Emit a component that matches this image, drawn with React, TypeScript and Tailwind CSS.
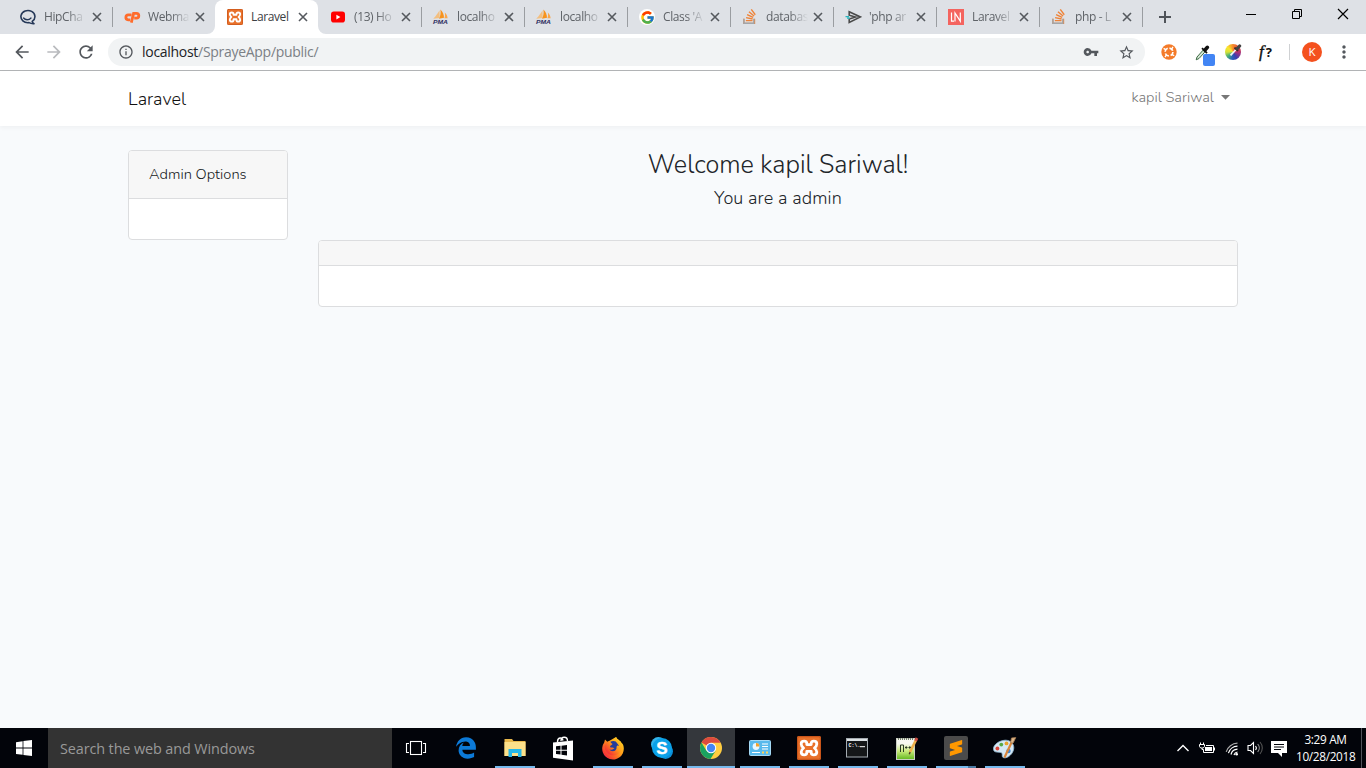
import React from "react";
import { SiStackoverflow, SiSublimetext } from "react-icons/si";
import { FcGoogle } from "react-icons/fc";
import { FaEdgeLegacy } from "react-icons/fa";
import { MdArrowBack, MdArrowForward, MdRefresh, MdVpnKey, MdStarBorder, MdInfoOutline, MdMoreVert } from "react-icons/md";

const HipChatIcon = () => (
  <svg className="-ml-[3px] shrink-0" width="17" height="16" viewBox="0 0 17 16" fill="none" stroke="#253858" strokeWidth="1.6">
    <path d="M13.2 12.4A7 6.1 0 1 0 10 13.6C11.4 14.3 13.2 14.8 15 14.6C14 14.1 13.4 13.4 13.2 12.4Z" strokeLinejoin="round" />
    <path d="M4.6 9C6.4 11.3 10 11.3 12 9" strokeLinecap="round" strokeWidth="1.3" />
  </svg>
);

const CpanelIcon = () => (
  <svg className="shrink-0" width="17" height="12" viewBox="0 0 17 12" fill="none" stroke="#ff6c2c" strokeWidth="2.8">
    <path d="M7.6 3.9H4.6A2.5 2.5 0 0 0 4.2 8.9H6.2" />
    <path d="M7.3 11.6L9.6 2.4H12.4A2.4 2.4 0 0 1 12.4 7.2H10.2" />
  </svg>
);

const XamppIcon = ({ size }: { size: number }) => (
  <span className="flex items-center justify-center rounded-[2px] bg-[#e9712a] text-white">
    <svg width={size} height={size} viewBox="0 0 24 24" fill="none" stroke="#fff" strokeWidth="2.8" strokeLinecap="round" strokeLinejoin="round">
      <rect x="0.6" y="0.6" width="22.8" height="22.8" rx="1.6" stroke="#c9551a" strokeWidth="1.2" />
      <path d="M9.8 8.6V7.6C9.8 5.9 8.8 5.2 7.2 5.2C5.2 5.2 4.2 6.2 4.2 8C4.2 9.8 5 10.8 6.6 12C5 13.2 4.2 14.2 4.2 16C4.2 17.8 5.2 18.8 7.2 18.8C8.8 18.8 9.8 18.1 9.8 16.4V15.4H14.2V16.4C14.2 18.1 15.2 18.8 16.8 18.8C18.8 18.8 19.8 17.8 19.8 16C19.8 14.2 19 13.2 17.4 12C19 10.8 19.8 9.8 19.8 8C19.8 6.2 18.8 5.2 16.8 5.2C15.2 5.2 14.2 5.9 14.2 7.6V8.6Z" />
    </svg>
  </span>
);

const YoutubeIcon = () => (
  <svg width="16" height="16" viewBox="0 0 16 16">
    <rect x="1" y="2.6" width="14" height="11" rx="2.8" fill="#f00" />
    <path d="M6.4 5.8V10.4L10.4 8.1Z" fill="#fff" />
  </svg>
);

const PmaIcon = () => (
  <svg className="shrink-0" width="18" height="16" viewBox="0 0 18 16">
    <path d="M7.5 1.2C5.8 4 4 7 1.2 9.8L7.7 9Z" fill="#f3bf80" />
    <path d="M8.4 0.4C10.8 2.5 12 5.5 12 8.8L7 9.7C8.6 7 8.9 3.5 8.4 0.4Z" fill="#f7931d" />
    <path d="M12.8 3.6C14.5 5.2 15.4 7 15.6 9.2L12.4 9.2C13.2 7.4 13.2 5.4 12.8 3.6Z" fill="#f9a64a" />
    <text x="1" y="15.2" fontFamily="Liberation Sans" fontSize="5.8" fontWeight="700" fontStyle="italic" fill="#2f2f5f" textLength="15" lengthAdjust="spacingAndGlyphs">PMA</text>
  </svg>
);

const ArtisanIcon = () => (
  <svg className="shrink-0" width="17" height="16" viewBox="0 0 17 16" fill="none">
    <path d="M4.2 2.8L15.4 8L4.2 13.4V10L10.4 8L4.2 6.2Z" stroke="#4a4a4a" strokeWidth="1.6" />
    <path d="M0.5 7.6H4M2 9.2H5" stroke="#27b5bd" strokeWidth="1.3" />
  </svg>
);

const LnIcon = () => (
  <svg width="16" height="16" viewBox="0 0 16 16" fill="none">
    <rect width="16" height="16" fill="#f4645f" />
    <path d="M3.5 3.5V12.2H6M7 12.5V4L12.3 12.2V3.5" stroke="#fff" strokeWidth="1.2" />
  </svg>
);

const StackIcon = () => (
  <span className="relative block size-4">
    <SiStackoverflow size={15} color="#ef8236" />
    <svg className="absolute left-0 top-0" width="16" height="16" viewBox="0 0 16 16" fill="none" stroke="#a2a6aa" strokeWidth="1.4">
      <path d="M1.9 9.8V14.3H11.8V9.8" />
    </svg>
  </span>
);

const GoogleIcon = () => (
  <span className="flex size-4 items-center justify-center rounded-full bg-white"><FcGoogle size={15} /></span>
);

const tabs = [
  { title: "HipCha", icon: <HipChatIcon /> },
  { title: "Webma", icon: <CpanelIcon /> },
  { title: "Laravel", icon: <XamppIcon size={16} />, active: true },
  { title: "(13) Ho", icon: <YoutubeIcon /> },
  { title: "localho", icon: <PmaIcon /> },
  { title: "localho", icon: <PmaIcon /> },
  { title: "Class 'A", icon: <GoogleIcon /> },
  { title: "databas", icon: <StackIcon /> },
  { title: "'php ar", icon: <ArtisanIcon /> },
  { title: "Laravel", icon: <LnIcon /> },
  { title: "php - L", icon: <StackIcon /> },
];

function TabStrip() {
  return (
    <div className="flex h-[34px] shrink-0 bg-[#dee1e6] pl-[9px]">
      {tabs.map((t, i) => (
        <div key={i} className={"relative flex h-[34px] w-[103px] shrink-0 items-center pl-3 " + (t.active ? "rounded-t-lg bg-white" : "")}>
          {t.active && (
            <>
              <svg className="absolute -left-2 bottom-0" width="8" height="8" viewBox="0 0 8 8"><path d="M8 0V8H0A8 8 0 0 0 8 0Z" fill="#fff" /></svg>
              <svg className="absolute -right-2 bottom-0" width="8" height="8" viewBox="0 0 8 8"><path d="M0 0V8H8A8 8 0 0 1 0 0Z" fill="#fff" /></svg>
            </>
          )}
          <div className="flex w-4 shrink-0 items-center justify-center">{t.icon}</div>
          <div
            className={
              "w-[42px] shrink-0 whitespace-nowrap text-[12px] leading-4 tracking-[-0.38px] " +
              (t.active ? "ml-2 text-[#3c4043]" : "text-[#5f6368] mask-r-from-55% mask-r-to-100% ") +
              (i === 0 ? "ml-[7px] mr-px" : t.active ? "" : "ml-2")
            }
          >
            {t.title}
          </div>
          <svg className="ml-[5px] shrink-0" width="10" height="10" viewBox="0 0 10 10" stroke="#55595e" strokeWidth="1.6"><path d="M1 1L9 9M9 1L1 9" /></svg>
          {i !== 1 && i !== 2 && <div className="absolute right-[-1px] top-[7px] h-5 w-px bg-[#9a9da1]" />}
        </div>
      ))}
      <svg className="ml-[17px] mt-[11px]" width="12" height="12" viewBox="0 0 12 12" stroke="#50545a" strokeWidth="2"><path d="M6 0V12M0 6H12" /></svg>
      <div className="ml-auto mt-2 flex gap-[34px] pr-[17px]">
        <svg width="12" height="12" viewBox="0 0 12 12" stroke="#000"><path d="M1 6.5H11" /></svg>
        <svg width="12" height="12" viewBox="0 0 12 12" stroke="#000" fill="none"><path d="M1.5 3.5H8.5V10.5H1.5ZM3.5 3.5V1.5H10.5V8.5H8.5" /></svg>
        <svg width="12" height="12" viewBox="0 0 12 12" stroke="#000" strokeWidth="1.2"><path d="M1 1L11 11M11 1L1 11" /></svg>
      </div>
    </div>
  );
}

const OrangeExt = () => (
  <svg width="16" height="16" viewBox="0 0 16 16" fill="none">
    <circle cx="8" cy="8" r="7.7" fill="#f47b2a" />
    <circle cx="8" cy="8" r="3.9" stroke="#fff" strokeWidth="1.7" strokeDasharray="4.3 1.83" />
    <path d="M2.6 4.4L4.6 5.6M12 2.8L10.8 4.8M4 13.2L5.2 11.2M13.2 11.8L11.2 10.6" stroke="#fff" strokeWidth="1.3" />
  </svg>
);

const DropperExt = () => (
  <svg width="20" height="22" viewBox="0 0 20 22" fill="none">
    <path d="M1.2 15.8L2 13L8.6 5.6L10.4 7.4L4 14.5Z" fill="#d5e6d5" stroke="#3d6b45" strokeWidth="1" />
    <path d="M7 4.2L12 9.2" stroke="#111" strokeWidth="1.8" />
    <path d="M10 6L12.4 3.3" stroke="#111" strokeWidth="3.6" strokeLinecap="round" />
    <rect x="8" y="10" width="12" height="12" rx="2" fill="#4285f4" />
  </svg>
);

const WheelExt = () => (
  <span className="relative block size-4 rounded-full bg-[conic-gradient(#f58a2c,#e8443a_50deg,#a0307e_100deg,#3a3fb0_150deg,#2a63b8_190deg,#45b07a_230deg,#d7e23a_270deg,#fbe62c_310deg,#f58a2c)]">
    <svg className="absolute left-0 top-0" width="17" height="16" viewBox="0 0 17 16" fill="none">
      <path d="M5.5 11.4L11.5 5" stroke="#f3f3f3" strokeWidth="1.8" />
      <path d="M9.5 3.6L13 7" stroke="#222" strokeWidth="1.6" /><path d="M12 4.8L14.6 2" stroke="#444" strokeWidth="3.2" strokeLinecap="round" />
    </svg>
  </span>
);

function Toolbar() {
  return (
    <div className="flex h-[37px] shrink-0 items-center border-b border-[#b2b4b6] bg-white pl-3 pr-3">
      <MdArrowBack size={20} color="#54585d" />
      <MdArrowForward size={20} color="#b9bbbe" className="ml-3" />
      <MdRefresh size={20} color="#54585d" className="ml-3" />
      <div className="ml-3 flex h-7 w-[1037px] items-center rounded-full bg-[#f1f3f4] pl-[10px] pr-[10px]">
        <MdInfoOutline size={16} color="#54585d" />
        <div className="ml-2 whitespace-nowrap pb-px text-[14px] tracking-[-0.29px] text-[#7b8085]">
          <span className="text-[#202124]">localhost</span>/SprayeApp/public/
        </div>
        <MdVpnKey size={16} color="#54585d" className="ml-auto" />
        <MdStarBorder size={17} color="#54585d" className="ml-[19px]" />
      </div>
      <div className="ml-4 flex items-center">
        <OrangeExt />
        <span className="ml-[18px] mt-[6px]"><DropperExt /></span>
        <span className="ml-[10px]"><WheelExt /></span>
        <span className="ml-[18px] flex w-4 text-[17px] leading-5 text-[#111]">
          <i className="font-['Liberation_Serif',serif] [-webkit-text-stroke:0.4px]">f</i>
          <span className="ml-[2px] font-['Open_Sans',sans-serif] text-[13px] font-bold">?</span>
        </span>
        <span className="ml-[14px] h-4 w-px bg-[#cfd1d3]" />
        <span className="ml-3 flex size-5 items-center justify-center rounded-full bg-[#f4511e] text-[11.5px] text-white">K</span>
        <MdMoreVert size={20} color="#54585d" className="ml-3" />
      </div>
    </div>
  );
}

function Page() {
  return (
    <div className="flex-1 bg-[#f8fafc] font-['Nunito','Open_Sans',sans-serif] text-[#212529]">
      <nav className="flex h-[55px] items-center justify-between bg-white pl-32 pr-[136px] shadow-[0_2px_4px_rgba(0,0,0,0.04)]">
        <span className="pt-px text-[18px] font-light text-[#111]">Laravel</span>
        <span className="flex items-center pb-px text-[14.6px] font-light text-[#777]">
          kapil Sariwal
          <svg className="ml-[7px]" width="9" height="5" viewBox="0 0 9 5" fill="#777"><path d="M0 0H9L4.5 4.8Z" /></svg>
        </span>
      </nav>
      <main className="flex items-start gap-[30px] px-32 pt-6">
        <section className="w-40 overflow-hidden rounded border border-[#dcdddf] bg-white">
          <div className="flex h-12 items-center border-b border-[#dcdddf] bg-[#f7f7f7] pb-px pl-5 text-[14.7px] font-light text-[#16191c]">Admin Options</div>
          <div className="h-10" />
        </section>
        <div className="w-[920px]">
          <h1 className="text-center text-[25.2px] font-light leading-[30px]">Welcome kapil Sariwal!</h1>
          <h2 className="mt-[7px] text-center text-[18px] font-light leading-[22px] tracking-[0.12px]">You are a admin</h2>
          <section className="mt-[31px] overflow-hidden rounded border border-[#dcdddf] bg-white">
            <div className="h-[25px] border-b border-[#dcdddf] bg-[#f7f7f7]" />
            <div className="h-10" />
          </section>
        </div>
      </main>
    </div>
  );
}

const TaskView = () => (
  <svg className="mr-[2px]" width="22" height="16" viewBox="0 0 22 16" fill="none" stroke="#fff" strokeWidth="1.1">
    <rect x="5.5" y="1.5" width="11" height="13" />
    <path d="M4 3.5H1.5V12.5H4M18 3.5H20.5V12.5H18" />
  </svg>
);

const Explorer = () => (
  <svg width="22" height="20" viewBox="0 0 22 20">
    <path d="M0.5 1H8L9.5 3H21.5V18H0.5Z" fill="#e9b84c" />
    <path d="M0.5 4H21.5V18H0.5Z" fill="#fce08a" />
    <path d="M4.5 19V11H17.5V19H14V15H8V19Z" fill="#26b7e8" />
  </svg>
);

const Store = () => (
  <svg className="mr-[2px]" width="22" height="25" viewBox="0 0 22 25" fill="none">
    <path d="M5.5 6C5.5 1 10 1 11 4.5M9 5C9 0 15.5 0 15.5 5" stroke="#fff" strokeWidth="1.4" />
    <path d="M1 6.5L21 4.5V24.5L1 21.8Z" fill="#fff" />
    <path d="M4 10.3L8.5 9.8V13.8H4ZM9.5 9.7L15 9V13.8H9.5ZM4 14.8H8.5V18.6L4 18.1ZM9.5 14.8H15V19.5L9.5 18.8Z" fill="#02040a" />
  </svg>
);

const Firefox = () => (
  <svg width="24" height="24" viewBox="0 0 24 24">
    <defs><linearGradient id="ff" x1="1" y1="0" x2="0" y2="1"><stop offset="0" stopColor="#ffe226" /><stop offset="0.45" stopColor="#ff9a1a" /><stop offset="0.8" stopColor="#f73b31" /><stop offset="1" stopColor="#e31587" /></linearGradient></defs>
    <path d="M15 1C16 3.5 20 4.5 20.5 7C22 7.5 22.8 10 22.8 12.5A10.8 10.8 0 1 1 3.2 6.5L4 3.5L6.5 6Z" fill="url(#ff)" />
    <circle cx="12.3" cy="11.5" r="6.6" fill="#243c9c" />
    <path d="M15 1C13 6 17 7 18 10C16 8.5 15.5 10 15.5 12.5C14 17 9 15 8.5 13.5C11 14.5 12 13 13.5 12.5C12 11 10 12 9 11C9 9 11.5 9 11.5 8C10 7 9 6 9.5 4.5C7.5 5 7 6 5.5 6L3.5 10C4 18 10 20.5 15 19C20 17.5 22.5 12 20.5 7C19.5 5 16 4 15 1Z" fill="url(#ff)" />
  </svg>
);

const Skype = () => (
  <svg width="24" height="24" viewBox="0 0 24 24">
    <circle cx="8.4" cy="8.4" r="7.4" fill="#35b5ec" /><circle cx="15.6" cy="15.6" r="7.4" fill="#0b8ed8" /><circle cx="12" cy="12" r="10" fill="#0ba1e8" />
    <text x="12" y="18" textAnchor="middle" fontFamily="Liberation Sans" fontSize="17" fontWeight="700" fill="#fff" stroke="#fff" strokeWidth="0.4">S</text>
  </svg>
);

const Chrome = () => (
  <svg width="24" height="24" viewBox="0 0 24 24">
    <circle cx="12" cy="12" r="11" fill="#ffcd41" />
    <path d="M12 12L2.5 6.5A11 11 0 0 1 21.6 6.7H12Z" fill="#dd4b3e" />
    <path d="M2.5 6.5A11 11 0 0 0 11.5 23L16.6 14.7L12 12L7.4 14.7Z" fill="#1aa260" />
    <circle cx="12" cy="12" r="5.2" fill="#fff" /><circle cx="12" cy="12" r="4.2" fill="#4486f5" />
  </svg>
);

const Panel = () => (
  <svg width="22" height="16" viewBox="0 0 22 16" fill="none">
    <rect x="0.5" y="0.5" width="21" height="15" rx="1" fill="#59b9ec" stroke="#a5d9f5" />
    <circle cx="7" cy="6.5" r="3.4" fill="#e9f7ff" /><path d="M7 6.5V3.1A3.4 3.4 0 0 1 10.4 6.5Z" fill="#f3a12a" />
    <path d="M13 4H19M13 6.5H19M13 9H19M3 12.5H11" stroke="#fff" strokeWidth="1.1" /><path d="M13 12.5H15M17 12.5H19" stroke="#ffd35a" strokeWidth="1.8" />
  </svg>
);

const Terminal = () => (
  <svg className="mr-[2px]" width="22" height="20" viewBox="0 0 22 20">
    <rect x="0.5" y="0.5" width="21" height="18.5" fill="#151719" stroke="#a4abb1" /><rect x="1" y="1" width="20" height="2" fill="#dde2e5" />
    <text x="2.5" y="9" fontFamily="Liberation Mono" fontSize="5" fontWeight="700" fill="#fff">C:\.</text><path d="M14 8.7H19" stroke="#fff" />
  </svg>
);

const NotepadPP = () => (
  <svg width="24" height="25" viewBox="0 0 24 25" fill="none">
    <defs><linearGradient id="npp" x1="0" y1="0" x2="0" y2="1"><stop offset="0.25" stopColor="#f7f8f2" /><stop offset="0.6" stopColor="#c9ea7c" /><stop offset="1" stopColor="#62b81e" /></linearGradient></defs>
    <rect x="1.5" y="2.5" width="18" height="21" fill="url(#npp)" stroke="#c9cec4" /><path d="M3 3H18" stroke="#79846f" strokeWidth="2" strokeDasharray="1 1" />
    <path d="M5.5 16V9H8.5V16M10 11.5H12.5M11.2 10.2V12.8M13.5 11.5H16M14.8 10.2V12.8" stroke="#2b3b24" strokeWidth="1" />
    <path d="M15 16L21 4" stroke="#eeb04a" strokeWidth="2.6" /><path d="M20.6 4.8L22 2" stroke="#d14f44" strokeWidth="2.8" /><path d="M14.3 18.3L15.1 16" stroke="#4c3a20" strokeWidth="1.4" />
  </svg>
);

const Sublime = () => (
  <span className="flex size-6 items-center justify-center rounded-[2px] bg-[#4b4b4b]"><SiSublimetext size={16} color="#ff9800" /></span>
);

const Paint = () => (
  <svg className="mr-[2px]" width="25" height="24" viewBox="0 0 25 24" fill="none">
    <path d="M11 4.5C17 3 22 7 21.8 12C21.5 17.5 16 22.5 12 21.8C8.5 21.2 12 17 8.5 16.5C5 16 2 16.5 1.5 13.5C1 9.5 5.5 5.5 11 4.5Z" fill="#d5e8f4" stroke="#8fb6d0" strokeWidth="0.8" />
    <circle cx="5.4" cy="12.5" r="1.9" fill="#d94439" /><circle cx="9.3" cy="8.6" r="1.9" fill="#56a944" /><circle cx="14.5" cy="7.4" r="1.9" fill="#e9a22c" /><circle cx="16.5" cy="15" r="2.2" fill="#3d86d4" />
    <path d="M12.5 21.5L19.5 6.5" stroke="#d9863b" strokeWidth="2.2" /><path d="M18.6 6.6L19.5 2L23.8 1.6L21 7.2Z" fill="#e0b98a" stroke="#a57a52" strokeWidth="0.8" />
  </svg>
);

const apps: { icon: React.ReactNode; state?: "open" | "active" | "stacked" }[] = [
  { icon: <TaskView /> },
  { icon: <FaEdgeLegacy size={22} color="#0c7ad8" /> },
  { icon: <Explorer />, state: "open" },
  { icon: <Store /> },
  { icon: <Firefox />, state: "open" },
  { icon: <Skype />, state: "open" },
  { icon: <Chrome />, state: "active" },
  { icon: <Panel />, state: "open" },
  { icon: <XamppIcon size={24} />, state: "open" },
  { icon: <Terminal />, state: "open" },
  { icon: <NotepadPP />, state: "open" },
  { icon: <Sublime />, state: "stacked" },
  { icon: <Paint />, state: "open" },
];

function Taskbar() {
  return (
    <div className="flex h-10 shrink-0 bg-[#02040a] text-white">
      <div className="flex w-12 items-center justify-center">
        <svg width="16" height="16" viewBox="0 0 16 16" fill="#fff"><path d="M0 2.2L6.6 1.3V7.6H0ZM7.4 1.1L16 0V7.6H7.4ZM0 8.4H6.6V14.8L0 13.9ZM7.4 8.4H16V16L7.4 14.9Z" /></svg>
      </div>
      <div className="flex w-[344px] items-center bg-[#333] pl-3 pt-px text-[14.4px] tracking-[-0.1px] text-[#999]">Search the web and Windows</div>
      <div className="ml-px flex gap-px">
        {apps.map((a, i) => (
          <div key={i} className={"flex w-12 flex-col items-center " + (a.state === "active" ? "bg-[#34373c]" : "")}>
            <div className="flex h-[38px] items-center pt-[2px]">{a.icon}</div>
            {a.state && (
              <div className={"flex h-[2px] justify-end bg-[#76b9ed] " + (a.state === "active" ? "w-12" : "w-10")}>
                {a.state === "stacked" && <div className="w-2 bg-[#4a7aa3]" />}
              </div>
            )}
          </div>
        ))}
      </div>
      <div className="ml-auto flex items-center">
        <svg width="12" height="8" viewBox="0 0 12 8" fill="none" stroke="#fff" strokeWidth="1.4"><path d="M0.5 7L6 1.5L11.5 7" /></svg>
        <svg className="ml-[10px]" width="17" height="13" viewBox="0 0 17 13" fill="none" stroke="#fff">
          <path d="M7 3.5H14.5V10.5H4.5V7.5" /><rect x="6.5" y="5.5" width="6" height="3" fill="#fff" /><path d="M0.5 2.5H5.5V4.5L4.3 6H1.7L0.5 4.5ZM1.5 2.5V0.5M4.5 2.5V0.5M3 6V7.5H4.5M15.5 5.5V8.5" />
        </svg>
        <svg className="ml-[9px] mt-px" width="14" height="14" viewBox="0 0 14 14" fill="none" stroke="#fff" strokeWidth="1.2">
          <path d="M1.2 9.8A12 12 0 0 1 12.5 1.2" stroke="#aaa" /><path d="M3.4 11.2A9.5 9.5 0 0 1 12.5 4.2M6 12.5A7 7 0 0 1 12.5 7.2M9 13A4.3 4.3 0 0 1 12.5 10" /><circle cx="11.7" cy="12.2" r="1.3" fill="#fff" stroke="none" />
        </svg>
        <svg className="ml-2" width="17" height="14" viewBox="0 0 17 14" fill="none" stroke="#fff" strokeWidth="1.1">
          <path d="M1 4.5H3.5L6.5 1.5V12.5L3.5 9.5H1Z" /><path d="M8.5 5A3 3 0 0 1 8.5 9" /><path d="M10.7 3A6 6 0 0 1 10.7 11" stroke="#999" /><path d="M13 1A9 9 0 0 1 13 13" stroke="#555" />
        </svg>
        <svg className="ml-[7px]" width="16" height="17" viewBox="0 0 16 17"><path d="M0 1H16V13H11V17L7 13H0Z" fill="#fff" /><path d="M3 4.5H13M3 7H13M3 9.5H10" stroke="#02040a" /></svg>
        <div className="ml-[9px] mb-px w-[60px] whitespace-nowrap text-center text-[11.8px] leading-[17px] tracking-[-0.33px]">
          <div className="mr-px">3:29 AM</div>
          <div className="mr-px">10/28/2018</div>
        </div>
        <div className="ml-[5px] mr-1 h-10 w-px bg-[#50525a]" />
      </div>
    </div>
  );
}

export default function App() {
  return (
    <div className="flex h-[768px] w-[1366px] flex-col overflow-hidden bg-white font-['Segoe_UI','Open_Sans',sans-serif]">
      <TabStrip />
      <Toolbar />
      <Page />
      <Taskbar />
    </div>
  );
}
